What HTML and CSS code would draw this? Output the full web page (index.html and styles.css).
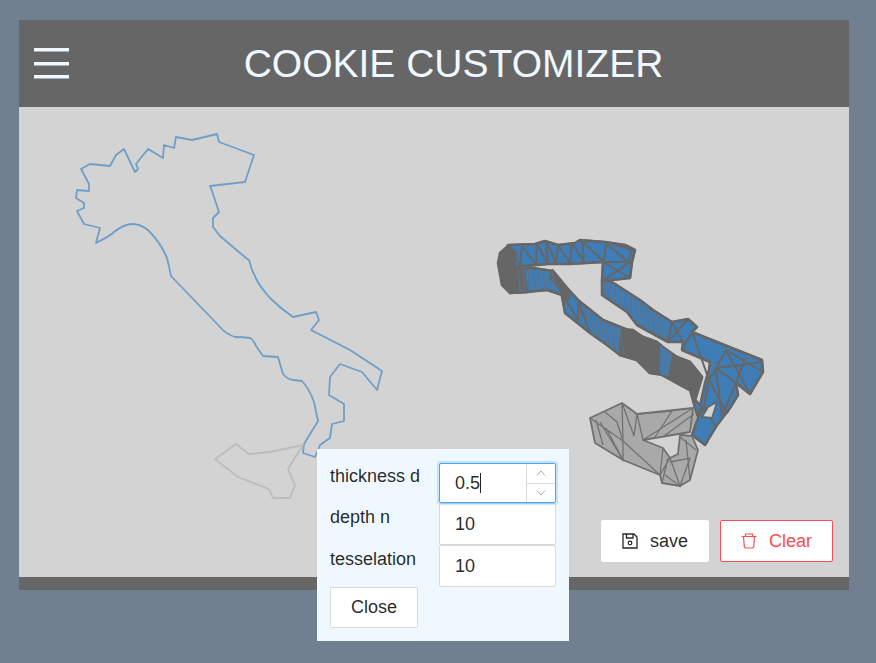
FILE: index.html
```html
<!DOCTYPE html>
<html lang="en">
<head>
<meta charset="utf-8">
<title>Cookie Customizer</title>
<link rel="stylesheet" href="styles.css">
</head>
<body>
<div class="app">
  <header class="top">
    <button class="burger" aria-label="menu"><span></span><span></span><span></span></button>
    <h1 class="title">COOKIE CUSTOMIZER</h1>
  </header>
  <main class="stage">
    <svg class="scene" viewBox="19 107 830 470" width="830" height="470" aria-hidden="true">
      <path class="outline" d="M96 243L100 228L84 224L77 211L84 208L84 203L76 198L77 190L89 191L89 184L81 169L90 164L110 166L116 155L124 149L135 172L138 169L136 164L148 149L163 158L164 145L174 148L176 137L192 140L217 134L219 142L254 155L245 182L210 186L212 191L219 212L213 218L213 227L220 236L246 258L249 260Q254 281 270 298Q280 308 293 317L316 312L319 320L311 330L350 350L382 371L377 390L362 372L340 364L330 377L329 395L344 404L344 421L332 424L330 438L320 445L315 457L303 453L304 444L318 421L314 402Q310 390 302 381L293 380Q287 379 283 374L278 357L263 356L256 346Q253 339 250 338Q243 337 235 337Q226 334 220 327L171 276Q169 266 167 258Q161 243 148 230Q140 224 133 224Q124 224 114 232Q110 236 96 243Z"/>
      <path class="sicily" d="M215 459L236 444L249 454L270 452L303 445L288 469L295 485L290 498L273 498L269 489L238 477Z"/>

      <g class="blue">
        <path d="M508 245L535 244L545 241L558 245L575 243L580 240L605 242L625 245L635 250L632 262L630 278L612 280L602 280L603 262L570 264L548 264L515 267L505 262Z"/>
        <path d="M602 280L612 282L640 300L653 310L672 322L688 319L697 327L692 332L762 360L763 372L750 394L736 383L738 395L730 408L715 428L705 445L692 435L697 420L705 383L709 370L710 362L682 350L683 342L668 342L637 325L627 312L602 295Z"/>
        <path d="M515 269L533 268L553 271L567 288L578 300L603 320L628 330L643 337L657 342L663 347L677 357L690 362L702 377L695 400L702 407L697 415L690 390L675 382L662 375L650 373L637 360L620 355L607 345L590 333L565 313L562 295L547 290L527 292L510 293Z"/>
      </g>
      <g class="blob">
        <path d="M508 246L516 253L514 268L524 272L527 292L510 293L502 285L498 263L500 253Z"/>
        <path d="M622 329L633 330L643 337L657 342L662 350L677 357L690 362L702 377L695 400L690 390L675 382L664 373L650 373L637 360L620 355Z"/>
        <path d="M553 271L567 288L569 298L563 301L560 288L550 278Z"/>
      </g>
      <path class="tri" d="M660 345L672 355L668 376L660 374Z"/>
      <g class="hatch">
        <path d="M518 269L520 292M523 269L525 292M528 268L530 291M533 268L535 291M538 269L540 290M543 270L545 290M548 271L550 290M552 272L556 292"/>
        <path d="M606 283L606 297M610 283L610 300M615 286L615 304M620 290L620 307M625 293L626 312M630 296L632 319M635 298L638 324M640 301L644 329M645 304L650 333M650 308L656 337M655 311L662 340M660 315L668 342"/>
        <path d="M580 303L582 326M585 307L588 331M590 310L594 336M595 315L600 341M600 319L605 344M605 322L610 348M610 324L616 352M615 326L620 354M620 328L624 354"/>
      </g>
      <g class="mesh">
        <path d="M508 245L520 265L522 246L536 264L537 244L548 264L546 241L556 263L558 245L570 263L572 243L584 262L582 241L604 262L606 243L628 262L632 250L610 243"/>
        <path d="M508 245L535 244L545 241L558 245L575 243L580 240L605 242L625 245L635 250L632 262L630 278L612 280L602 280L603 262L570 264L548 264L515 267"/>
        <path d="M603 262L630 278M603 262L630 262L604 280"/>
        <path d="M602 280L612 282L640 300L653 310L672 322L688 319L697 327L692 332"/>
        <path d="M602 280L602 295L627 312L637 325L668 342L683 342"/>
        <path d="M672 322L683 342M688 319L668 342M672 322L668 342"/>
        <path d="M515 269L533 268L553 271M510 293L527 292L547 290L562 295L565 313L590 333L607 345L620 355"/>
        <path d="M567 288L578 300L603 320L628 330M566 300L578 320L578 300L590 333"/>
        <path d="M692 332L762 360L763 372L750 394L736 383L716 368L709 380L692 332M716 368L726 350L750 394M726 350L763 372M736 383L745 358M716 368L762 362M709 380L727 413L738 395L736 383L722 416L716 370M709 380L704 407M704 407L716 427L705 445L692 435L697 420L704 407M692 332L682 350L710 362"/>
      </g>
      <path class="bg-hole" d="M708 407L717 402L712 418L702 417Z"/>
      <path class="gray" d="M590 418L622 403L637 414L693 408L697 418L690 432L643 440L663 448L670 458L678 454L680 435L692 436L698 450L690 480L680 486L662 483L660 475L623 460L595 443Z"/>
      <path class="graymesh" d="M590 418L622 403L637 414L693 408L690 432L643 440L663 448L670 458L678 454L680 435L692 436L698 450L690 480L680 486L662 483L660 475L623 460L595 443Z"/>
      <path class="grayfine" d="M590 418L623 441L622 403L634 436L637 414L643 440L693 408M605 412L617 422L623 441M596 420L603 445M600 422L623 460L623 441L660 475L663 448M606 428L622 458M637 414L672 411L655 437M664 436L694 414M665 475L680 486L670 458L660 475M662 483L668 458M670 462L690 458L680 486M680 437L696 450M686 440L690 480"/>
    </svg>
    <div class="actions">
      <button class="btn">
        <svg class="ico" viewBox="0 0 16 16" width="16" height="16"><path d="M1 1H12L15 4V15H1ZM4.500 1.500V5H11V1.500" fill="none" stroke="currentColor" stroke-width="1.300"/><circle cx="8" cy="10" r="1.800" fill="none" stroke="currentColor" stroke-width="1.200"/></svg>
        <span>save</span>
      </button>
      <button class="btn danger">
        <svg class="ico" viewBox="0 0 16 16" width="16" height="16"><path d="M.5 3.500H15.500M4.500 3.500V1H11.500V3.500M2.500 3.500L3.300 14L4.500 15H11.500L12.700 14L13.500 3.500" fill="none" stroke="currentColor" stroke-width="1.200"/></svg>
        <span>Clear</span>
      </button>
    </div>
  </main>
  <footer class="bottom"></footer>
</div>

<form class="panel">
  <div class="grid">
    <label class="lab">thickness d</label>
    <div class="num focus">
      <span class="val">0.5<i class="caret"></i></span>
      <span class="steppers">
        <span class="step"><svg viewBox="0 0 10 6" width="10" height="6"><path d="M1 5.500L5 1L9 5.500" fill="none" stroke="currentColor"/></svg></span>
        <span class="step"><svg viewBox="0 0 10 6" width="10" height="6"><path d="M1 .5L5 5L9 .5" fill="none" stroke="currentColor"/></svg></span>
      </span>
    </div>
    <label class="lab low">depth n</label>
    <div class="num"><span class="val">10</span></div>
    <label class="lab low">tesselation</label>
    <div class="num"><span class="val">10</span></div>
  </div>
  <button type="button" class="btn close">Close</button>
</form>
</body>
</html>
```

FILE: styles.css
```css
* { box-sizing: border-box; }
html, body { margin: 0; height: 100%; }
body {
  background: #708090;
  font-family: "Liberation Sans", Arial, sans-serif;
  color: rgba(0, 0, 0, .85);
  padding: 20px 27px 0 19px;
  position: relative;
  overflow: hidden;
}
.app { width: 830px; display: flex; flex-direction: column; }
.top {
  height: 87px;
  background: #666;
  display: flex;
  align-items: center;
  padding: 0 15px;
}
.burger {
  width: 35px;
  height: 31px;
  padding: 0;
  border: 0;
  background: none;
  display: flex;
  flex-direction: column;
  justify-content: space-between;
}
.burger span { display: block; height: 4px; background: aliceblue; border-bottom: 1px solid #a9afb4; }
.title {
  flex: 1;
  margin: 0;
  padding-left: 4px;
  text-align: center;
  font-weight: 400;
  font-size: 39px;
  line-height: 44px;
  color: aliceblue;
}
.stage {
  height: 470px;
  background: #d3d3d3;
  position: relative;
}
.scene { display: block; }
.outline { fill: none; stroke: #6f9fc9; stroke-width: 1.800; stroke-linejoin: round; }
.sicily { fill: none; stroke: #bcbcbc; stroke-width: 1.800; stroke-linejoin: round; }
.blue path { fill: #3f7db7; stroke: #666; stroke-width: 2.600; stroke-linejoin: round; }
.blob path { fill: #666; stroke: #666; stroke-width: 2.600; }
.tri { fill: #4a7ba8; }
.hatch path { fill: none; stroke: #5f7286; stroke-width: 1.400; }
.mesh path { fill: none; stroke: #666; stroke-width: 2; stroke-linejoin: round; }
.bg-hole { fill: #d3d3d3; stroke: #666; stroke-width: 1.800; }
.gray { fill: #a9a9a9; }
.graymesh { fill: none; stroke: #707070; stroke-width: 1.800; stroke-linejoin: round; }
.grayfine { fill: none; stroke: #727272; stroke-width: 1.300; }
.bottom { height: 13px; background: #666; }
.actions {
  position: absolute;
  right: 16px;
  bottom: 15px;
  display: flex;
  gap: 11px;
}
.btn {
  height: 42px;
  padding: 0;
  background: #fff;
  border: 1px solid #d9d9d9;
  border-radius: 2px;
  font: 18px "Liberation Sans", Arial, sans-serif;
  color: rgba(0, 0, 0, .85);
  display: flex;
  align-items: center;
  justify-content: center;
  gap: 12px;
}
.actions .btn { width: 108px; border-color: #fff; }
.actions .btn.danger { width: 113px; border-color: #ff4d4f; color: #ff4d4f; }
.ico { display: block; flex: none; }
.panel {
  position: absolute;
  left: 317px;
  top: 449px;
  width: 252px;
  height: 192px;
  padding: 14px 13px 0;
  background: aliceblue;
}
.grid {
  display: grid;
  grid-template-columns: 109px 117px;
}
.lab { font-size: 18px; line-height: 24px; padding-top: 1px; }
.lab.low { padding-top: 2px; }
.num {
  height: 42px;
  background: #fff;
  border: 1px solid #d9d9d9;
  border-radius: 2px;
  display: flex;
  align-items: center;
  font-size: 18px;
}
.num.focus {
  height: 40px;
  border-color: #40a9ff;
  box-shadow: 0 0 0 2px rgba(24, 144, 255, .2);
  position: relative;
}
.val { flex: 1; padding-left: 15px; }
.caret { display: inline-block; width: 1px; height: 20px; background: #222; vertical-align: -4px; }
.steppers {
  width: 29px;
  align-self: stretch;
  display: flex;
  flex-direction: column;
  border-left: 1px solid #d9d9d9;
}
.step {
  flex: 1;
  display: flex;
  align-items: center;
  justify-content: center;
  color: #aaa;
}
.step + .step { border-top: 1px solid #d9d9d9; }
.close { width: 88px; height: 41px; }
```
